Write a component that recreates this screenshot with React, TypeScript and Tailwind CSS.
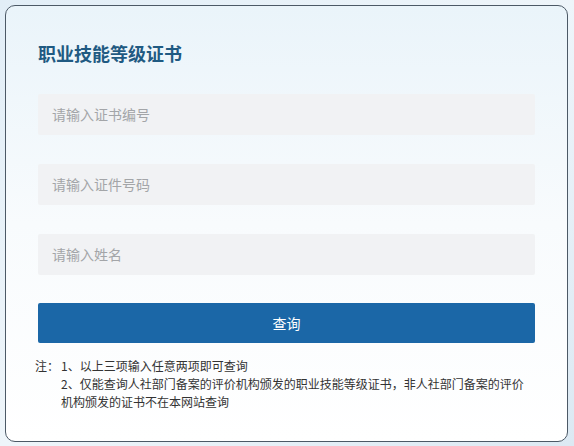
import React from "react";

export default function App() {
  const font = { fontFamily: '"Noto Sans CJK SC", "Noto Sans", sans-serif' };
  return (
    <div
      className="w-[574px] h-[446px] bg-gradient-to-br from-[#e2eef7] via-[#eef5fa] to-[#dce9f3] pt-[5px] pl-[5px]"
      style={font}
    >
      <div className="w-[563px] h-[437px] rounded-[10px] border border-[#4c5966] bg-gradient-to-b from-[#eaf4fa] via-[#f8fbfd] to-white px-[32px] pt-[35px]">
        <h1 className="text-[18px] leading-[24px] font-bold text-[#1f5a82]">职业技能等级证书</h1>
        <div className="mt-[29px] flex flex-col gap-[29px]">
          <div className="h-[41px] bg-[#f1f2f4] rounded-[2px] flex items-center px-[14px] text-[14px] text-[#a3a5a8]">请输入证书编号</div>
          <div className="h-[41px] bg-[#f1f2f4] rounded-[2px] flex items-center px-[14px] text-[14px] text-[#a3a5a8]">请输入证件号码</div>
          <div className="h-[41px] bg-[#f1f2f4] rounded-[2px] flex items-center px-[14px] text-[14px] text-[#a3a5a8]">请输入姓名</div>
        </div>
        <button className="mt-[28px] w-full h-[40px] bg-[#1b67a7] rounded-[2px] text-white text-[14px] flex items-center justify-center">查询</button>
        <div className="mt-[14px] -ml-[3px] flex text-[12px] leading-[18px] text-[#333]">
          <div className="w-[26px] shrink-0">注：</div>
          <div className="flex-1 pr-[4px]">
            <div>1、以上三项输入任意两项即可查询</div>
            <div>2、仅能查询人社部门备案的评价机构颁发的职业技能等级证书，非人社部门备案的评价机构颁发的证书不在本网站查询</div>
          </div>
        </div>
      </div>
    </div>
  );
}
